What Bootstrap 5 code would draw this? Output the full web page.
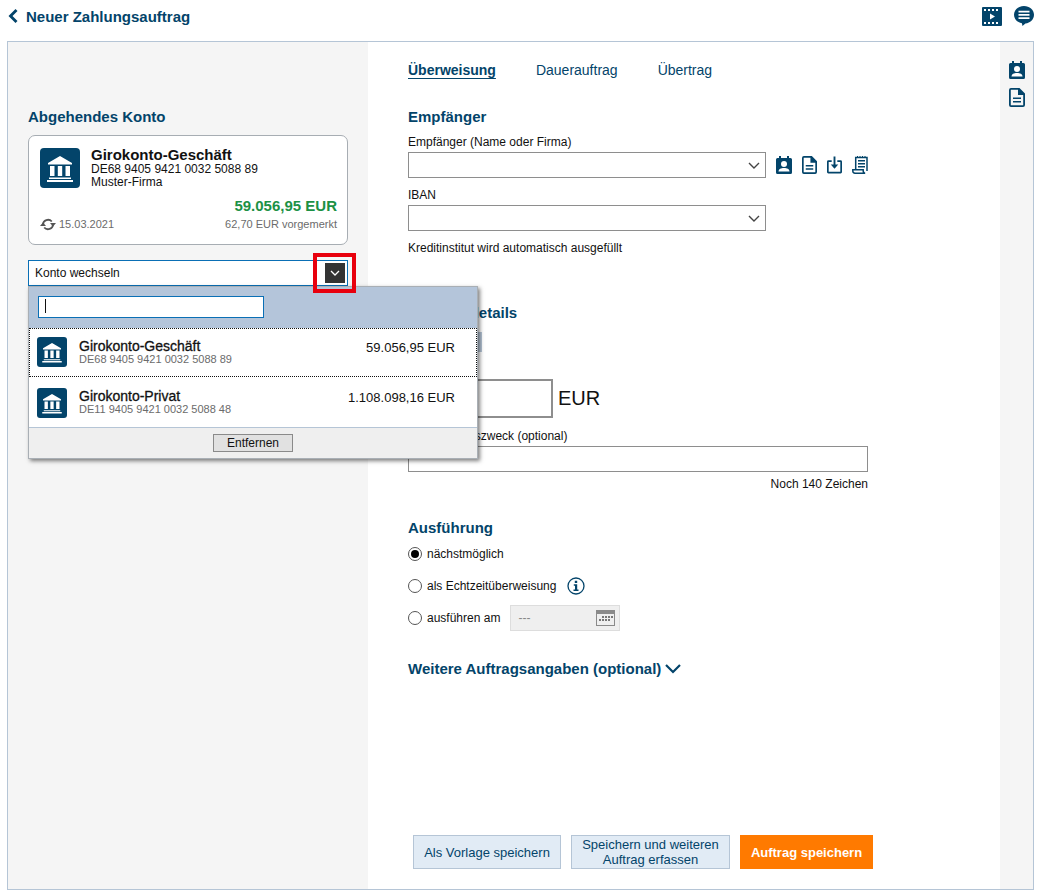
<!DOCTYPE html>
<html lang="de">
<head>
<meta charset="utf-8">
<title>Neuer Zahlungsauftrag</title>
<link href="https://cdn.jsdelivr.net/npm/bootstrap@5.3.0/dist/css/bootstrap.min.css" rel="stylesheet">
<style>
html,body{height:893px;overflow:hidden}
body{font-family:"Liberation Sans",Arial,sans-serif;font-size:12px;color:#111;background:#fff;line-height:14px}
.ic{fill:#03446a;display:block;flex:none}
.topbar{height:41px;padding:0 7px 9px 8px}
.page-title{font-size:15px;font-weight:700;color:#03446a;line-height:17px}
.frame{height:849px;margin:0 7px;border:1px solid #b5c5d6;position:relative}
.side-left{width:360px;background:#f5f5f5;padding:67px 20px 0;position:relative}
.side-right{width:33px;background:#f5f5f5;padding-top:19px}
.main-col{width:632px;padding:20px 40px}
.sec-h{font-size:15px;font-weight:700;color:#03446a;line-height:15px;margin:0 0 2px}
.acct{height:110px;border:1px solid #a7adb3;border-radius:7px;background:#fff;margin-top:11px;padding:12px 10px 0 11px}
.bank{width:40px;height:40px;border-radius:4px;background:#03446a}
.bank-s{width:30px;height:30px;border-radius:3px;background:#03446a;flex:none}
.acct-text{margin-left:11px}
.acct-name{font-size:15px;font-weight:700;line-height:13px;margin-bottom:2px;color:#111}
.acct-line{line-height:13px;color:#111}
.acct-bal{font-size:15px;font-weight:700;color:#1c9145;line-height:17px}
.muted-sm{font-size:11px;color:#6b6b6b;line-height:13px}
.sync-ic{margin-right:3px}
.chg{height:26px;margin-top:15px;border:1px solid #0a6fb5;background:#fff;padding:0 2px 0 6px}
.chg-btn{width:20px;height:20px;background:#333;display:flex;align-items:center;justify-content:center}
.mark-red{position:absolute;left:305px;top:211px;width:43px;height:40px;border:4px solid #e8000d;pointer-events:none;z-index:6}
.drop{position:absolute;left:20px;top:244px;width:450px;background:#fff;border:1px solid #a9afb5;box-shadow:2px 2px 4px rgba(0,0,0,.5);z-index:5}
.drop-search{height:41px;background:#b4c5da;padding:9px 9px 0}
.drop-input{width:226px;height:22px;background:#fff;border:1px solid #0a6fb5;padding:2px 6px}
.caret-bar{width:1px;height:14px;background:#111;display:block}
.drop-row{height:50px;padding:1px 22px 0 8px}
.drop-row.sel{height:49px;padding:0 22px 1px 8px;outline:1px dotted #111;outline-offset:-1px}
.drop-name{font-size:14px;line-height:14px;color:#111;-webkit-text-stroke:.3px #111}
.drop-iban{font-size:11px;color:#6b6b6b;line-height:13px}
.drop-amt{font-size:13px;color:#111;padding-top:13px}
.drop-foot{height:31px;background:#efefef;border-top:1px solid #b5c5d6;padding-top:6px}
.btn-remove{width:80px;height:18px;background:#e1e1e1;border:1px solid #8a8a8a;border-radius:0;font-size:12px;line-height:14px;padding:0;color:#111;display:block;margin:0 auto}
.tab{font-size:14px;color:#03446a;text-decoration:none;line-height:17px;margin-right:40px}
.tab-on{font-weight:700;text-decoration:underline;text-underline-offset:3px}
.lbl{display:block;line-height:14px;margin:0 0 3px;color:#111}
.sel-box{width:358px;height:26px;border:1px solid #8e8e8e;background:#fff;padding-right:5px}
.seg-box{width:74px;height:20px;background:#b5c5d6;margin-top:10px}
.amt-box{width:145px;height:39px;border:2px solid #8e8e8e;background:#fff}
.eur{font-size:20px;line-height:23px;color:#111;margin-left:5px}
.txt-box{width:460px;height:26px;border:1px solid #8e8e8e;background:#fff}
.note-r{width:460px;text-align:right;line-height:14px;margin-top:5px;color:#111}
.radio-row{gap:5px}
.radio-dot{width:14px;height:14px;border:1px solid #555;border-radius:50%;background:#fff;flex:none;display:flex;align-items:center;justify-content:center}
.radio-dot i{display:block;width:8px;height:8px;background:#000;border-radius:50%}
.info-ic{margin-left:6px}
.date-box{width:110px;height:26px;background:#efefef;border:1px solid #ddd;padding:0 4px 0 7px;color:#888;margin-left:5px}
.act{height:34px;font-size:13px;line-height:15px;border-radius:0;border:1px solid #b5c5d6;background:#e1ebf5;color:#03446a;padding:0}
.act-orange{background:#ff7a00;border-color:#ff7a00;color:#fff;font-weight:700}
.w148{width:148px}.w160{width:159px}.w133{width:133px}
.tool-ic{margin-left:10px}
.more-h{margin-bottom:0}
.mt-empf{margin-top:30px}
.lbl-first{margin-top:9px}
.mt-iban{margin-top:10px}
.mt-kred{margin-top:10px}
.mt-det{margin-top:50px}
.mt-betrag{margin-top:10px}
.mt-verw{margin-top:11px}
.mt-ausf{margin-top:29px}
.mt-r1{margin-top:10px}
.mt-r2{margin-top:16px}
.mt-r3{margin-top:10px}
.mt-more{margin-top:30px}
.actions{padding-left:5px;gap:10px}
.right-tools{gap:9px}
</style>
</head>
<body>
<svg width="0" height="0" class="position-absolute">
<defs>
<symbol id="i-bank" viewBox="0 0 40 40"><path fill="#fff" d="M20 8 32 15v1.500H8V15zM10 18h4.500v10H10zM17.800 18h4.400v10h-4.400zM25.500 18H30v10h-4.500zM9 29.500h22V31H9zM7 32h26v2H7z"/></symbol>
<symbol id="i-contact" viewBox="0 0 16 18"><path d="M3 0h2v2h6V0h2v2h1.500A1.500 1.500 0 0 1 16 3.500v13a1.500 1.500 0 0 1-1.500 1.500h-13A1.500 1.500 0 0 1 0 16.500v-13A1.500 1.500 0 0 1 1.500 2H3z"/><circle cx="8" cy="8" r="3" fill="#fff"/><path fill="#fff" d="M2.500 15.500c0-2.500 2.500-3.500 5.500-3.500s5.500 1 5.500 3.500z"/></symbol>
<symbol id="i-doc" viewBox="0 0 16 19"><path fill-rule="evenodd" d="M2 0h8.500L16 5.500V17a2 2 0 0 1-2 2H2a2 2 0 0 1-2-2V2a2 2 0 0 1 2-2zm0 1.800a.3.300 0 0 0-.2.200v15a.3.300 0 0 0 .2.200h12a.3.300 0 0 0 .2-.2V7H9V1.800z"/><path d="M4 9.500h8v1.600H4zM4 13h8v1.600H4z"/></symbol>
<symbol id="i-import" viewBox="0 0 16 18"><path fill-rule="evenodd" d="M1.500 4H5v1.800H1.800v10.400h12.400V5.800H11V4h3.500A1.500 1.500 0 0 1 16 5.500v11a1.500 1.500 0 0 1-1.500 1.500h-13A1.500 1.500 0 0 1 0 16.500v-11A1.500 1.500 0 0 1 1.500 4z"/><path d="M7 0h2v8.500h3L8 13 4 8.500h3z"/></symbol>
<symbol id="i-ledger" viewBox="0 0 16 18"><path fill="none" stroke="#03446a" stroke-width="1.500" d="M3.700 13V1.500h11.300V15"/><path d="M5 0h1v1H5zM7.500 0h1v1h-1zM10 0h1v1h-1zM12.500 0h1v1h-1z"/><path d="M6 4h7v1.500H6zM6 7h7v1.500H6zM6 10h7v1.500H6z"/><path fill="none" stroke="#03446a" stroke-width="1.500" d="M.8 13.800h10.400v1c0 1.200.8 2.400 2 2.400H3c-1.300 0-2.200-1-2.200-2.400z"/></symbol>
</defs>
</svg>

<div class="topbar d-flex align-items-center justify-content-between">
  <div class="d-flex align-items-center">
    <svg class="ic" width="10" height="14" viewBox="0 0 10 14"><path d="M7.500 0 9.500 2 4.500 7l5 5-2 2L.5 7z"/></svg>
    <span class="page-title ms-2">Neuer Zahlungsauftrag</span>
  </div>
  <div class="d-flex align-items-center gap-2">
    <svg class="ic" width="20" height="19" viewBox="0 0 20 19"><path fill-rule="evenodd" d="M1 0h18a1 1 0 0 1 1 1v17a1 1 0 0 1-1 1H1a1 1 0 0 1-1-1V1a1 1 0 0 1 1-1zm1 2v2h2V2zm4 0v2h2V2zm4 0v2h2V2zm4 0v2h2V2zm-12 13v2h2v-2zm4 0v2h2v-2zm4 0v2h2v-2zm4 0v2h2v-2zM8 6.500v6l5-3z"/></svg>
    <svg class="ic ms-1" width="20" height="20" viewBox="0 0 20 20"><path fill-rule="evenodd" d="M10 0c5.500 0 10 3.900 10 8.800 0 4.600-3.800 8.300-8.600 8.700L8.500 20l-.6-2.700C3.300 16.500 0 13 0 8.800 0 3.900 4.500 0 10 0zM4.500 4.700v1.700h11V4.700zm0 3.300v1.700h11V8zm0 3.300V13h11v-1.700z"/></svg>
  </div>
</div>

<div class="frame d-flex">
  <div class="side-left">
    <h2 class="sec-h">Abgehendes Konto</h2>
    <div class="acct">
      <div class="d-flex">
        <svg class="bank" width="40" height="40"><use href="#i-bank"/></svg>
        <div class="acct-text">
          <div class="acct-name">Girokonto-Geschäft</div>
          <div class="acct-line">DE68 9405 9421 0032 5088 89</div>
          <div class="acct-line">Muster-Firma</div>
        </div>
      </div>
      <div class="acct-bal text-end mt-2">59.056,95 EUR</div>
      <div class="d-flex justify-content-between align-items-center mt-1">
        <span class="muted-sm d-flex align-items-center">
          <svg width="16" height="13" viewBox="0 0 16 13" class="sync-ic"><path fill="none" stroke="#555" stroke-width="1.800" d="M3 6.500a5 4.800 0 0 1 8.800-3M13 6.500a5 4.800 0 0 1-8.800 3"/><path fill="#555" d="M10 5h6l-3 3.500zM0 8h6L3 4.500z"/></svg>15.03.2021</span>
        <span class="muted-sm">62,70 EUR vorgemerkt</span>
      </div>
    </div>
    <div class="chg d-flex align-items-center justify-content-between">
      <span>Konto wechseln</span>
      <span class="chg-btn"><svg width="10" height="6" viewBox="0 0 10 6"><path fill="none" stroke="#fff" stroke-width="1.300" d="m1 1 4 4 4-4"/></svg></span>
    </div>
    <div class="mark-red"></div>
    <div class="drop">
      <div class="drop-search"><div class="drop-input"><span class="caret-bar"></span></div></div>
      <div class="drop-row sel d-flex align-items-center">
        <svg class="bank-s" width="30" height="30"><use href="#i-bank"/></svg>
        <div class="ms-2 ps-1 flex-grow-1"><div class="drop-name">Girokonto-Geschäft</div><div class="drop-iban">DE68 9405 9421 0032 5088 89</div></div>
        <span class="drop-amt align-self-start">59.056,95 EUR</span>
      </div>
      <div class="drop-row d-flex align-items-center">
        <svg class="bank-s" width="30" height="30"><use href="#i-bank"/></svg>
        <div class="ms-2 ps-1 flex-grow-1"><div class="drop-name">Girokonto-Privat</div><div class="drop-iban">DE11 9405 9421 0032 5088 48</div></div>
        <span class="drop-amt align-self-start">1.108.098,16 EUR</span>
      </div>
      <div class="drop-foot"><button type="button" class="btn btn-remove">Entfernen</button></div>
    </div>
  </div>

  <div class="main-col d-flex flex-column">
    <nav class="d-flex">
      <a class="tab tab-on" href="#">Überweisung</a>
      <a class="tab" href="#">Dauerauftrag</a>
      <a class="tab" href="#">Übertrag</a>
    </nav>
    <h2 class="sec-h mt-empf">Empfänger</h2>
    <label class="lbl lbl-first">Empfänger (Name oder Firma)</label>
    <div class="d-flex align-items-center">
      <div class="sel-box d-flex align-items-center justify-content-end"><svg width="12" height="7" viewBox="0 0 12 7"><path fill="none" stroke="#444" stroke-width="1.400" d="m1 1 5 5 5-5"/></svg></div>
      <svg class="ic tool-ic" width="16" height="18"><use href="#i-contact"/></svg>
      <svg class="ic tool-ic" width="15" height="18"><use href="#i-doc"/></svg>
      <svg class="ic tool-ic" width="15" height="18"><use href="#i-import"/></svg>
      <svg class="ic tool-ic" width="16" height="18"><use href="#i-ledger"/></svg>
    </div>
    <label class="lbl mt-iban">IBAN</label>
    <div class="sel-box d-flex align-items-center justify-content-end"><svg width="12" height="7" viewBox="0 0 12 7"><path fill="none" stroke="#444" stroke-width="1.400" d="m1 1 5 5 5-5"/></svg></div>
    <div class="mt-kred">Kreditinstitut wird automatisch ausgefüllt</div>

    <h2 class="sec-h mt-det">Auftragsdetails</h2>
    <div class="seg-box"></div>
    <label class="lbl mt-betrag">Betrag</label>
    <div class="d-flex align-items-center">
      <div class="amt-box"></div>
      <span class="eur">EUR</span>
    </div>
    <label class="lbl mt-verw">Verwendungszweck (optional)</label>
    <div class="txt-box"></div>
    <div class="note-r">Noch 140 Zeichen</div>

    <h2 class="sec-h mt-ausf">Ausführung</h2>
    <div class="d-flex align-items-center radio-row mt-r1"><span class="radio-dot"><i></i></span><span>nächstmöglich</span></div>
    <div class="d-flex align-items-center radio-row mt-r2"><span class="radio-dot"></span><span>als Echtzeitüberweisung</span>
      <svg class="info-ic" width="18" height="18" viewBox="0 0 18 18"><circle cx="9" cy="9" r="8" fill="none" stroke="#03446a" stroke-width="1.300"/><path fill="#03446a" d="M7.800 3.800h2.400v2.200H7.800zM6.800 7.300h3.400v5.200h1.300v1.500H6.500v-1.500h1.500V8.800H6.800z"/></svg>
    </div>
    <div class="d-flex align-items-center radio-row mt-r3"><span class="radio-dot"></span><span>ausführen am</span>
      <div class="date-box d-flex align-items-center justify-content-between"><span>---</span>
        <svg width="19" height="16" viewBox="0 0 19 16"><path fill="#8a8a8a" fill-rule="evenodd" d="M0 0h19v16H0zm1 4v11h17V4z"/><path fill="#777" d="M6 6h2v2H6zM9 6h2v2H9zM12 6h2v2h-2zM15 6h2v2h-2zM3 9h2v2H3zM6 9h2v2H6zM9 9h2v2H9zM12 9h2v2h-2z"/></svg>
      </div>
    </div>
    <div class="d-flex align-items-center mt-more">
      <h2 class="sec-h more-h">Weitere Auftragsangaben (optional)</h2>
      <svg class="ms-1" width="16" height="10" viewBox="0 0 16 10"><path fill="none" stroke="#03446a" stroke-width="2.200" d="m1 1 7 7 7-7"/></svg>
    </div>

    <div class="d-flex mt-auto actions">
      <button type="button" class="btn act w148">Als Vorlage speichern</button>
      <button type="button" class="btn act w160">Speichern und weiteren<br>Auftrag erfassen</button>
      <button type="button" class="btn act act-orange w133">Auftrag speichern</button>
    </div>
  </div>

  <div class="side-right d-flex flex-column align-items-center right-tools">
    <svg class="ic" width="16" height="18"><use href="#i-contact"/></svg>
    <svg class="ic" width="16" height="19"><use href="#i-doc"/></svg>
  </div>
</div>
</body>
</html>
